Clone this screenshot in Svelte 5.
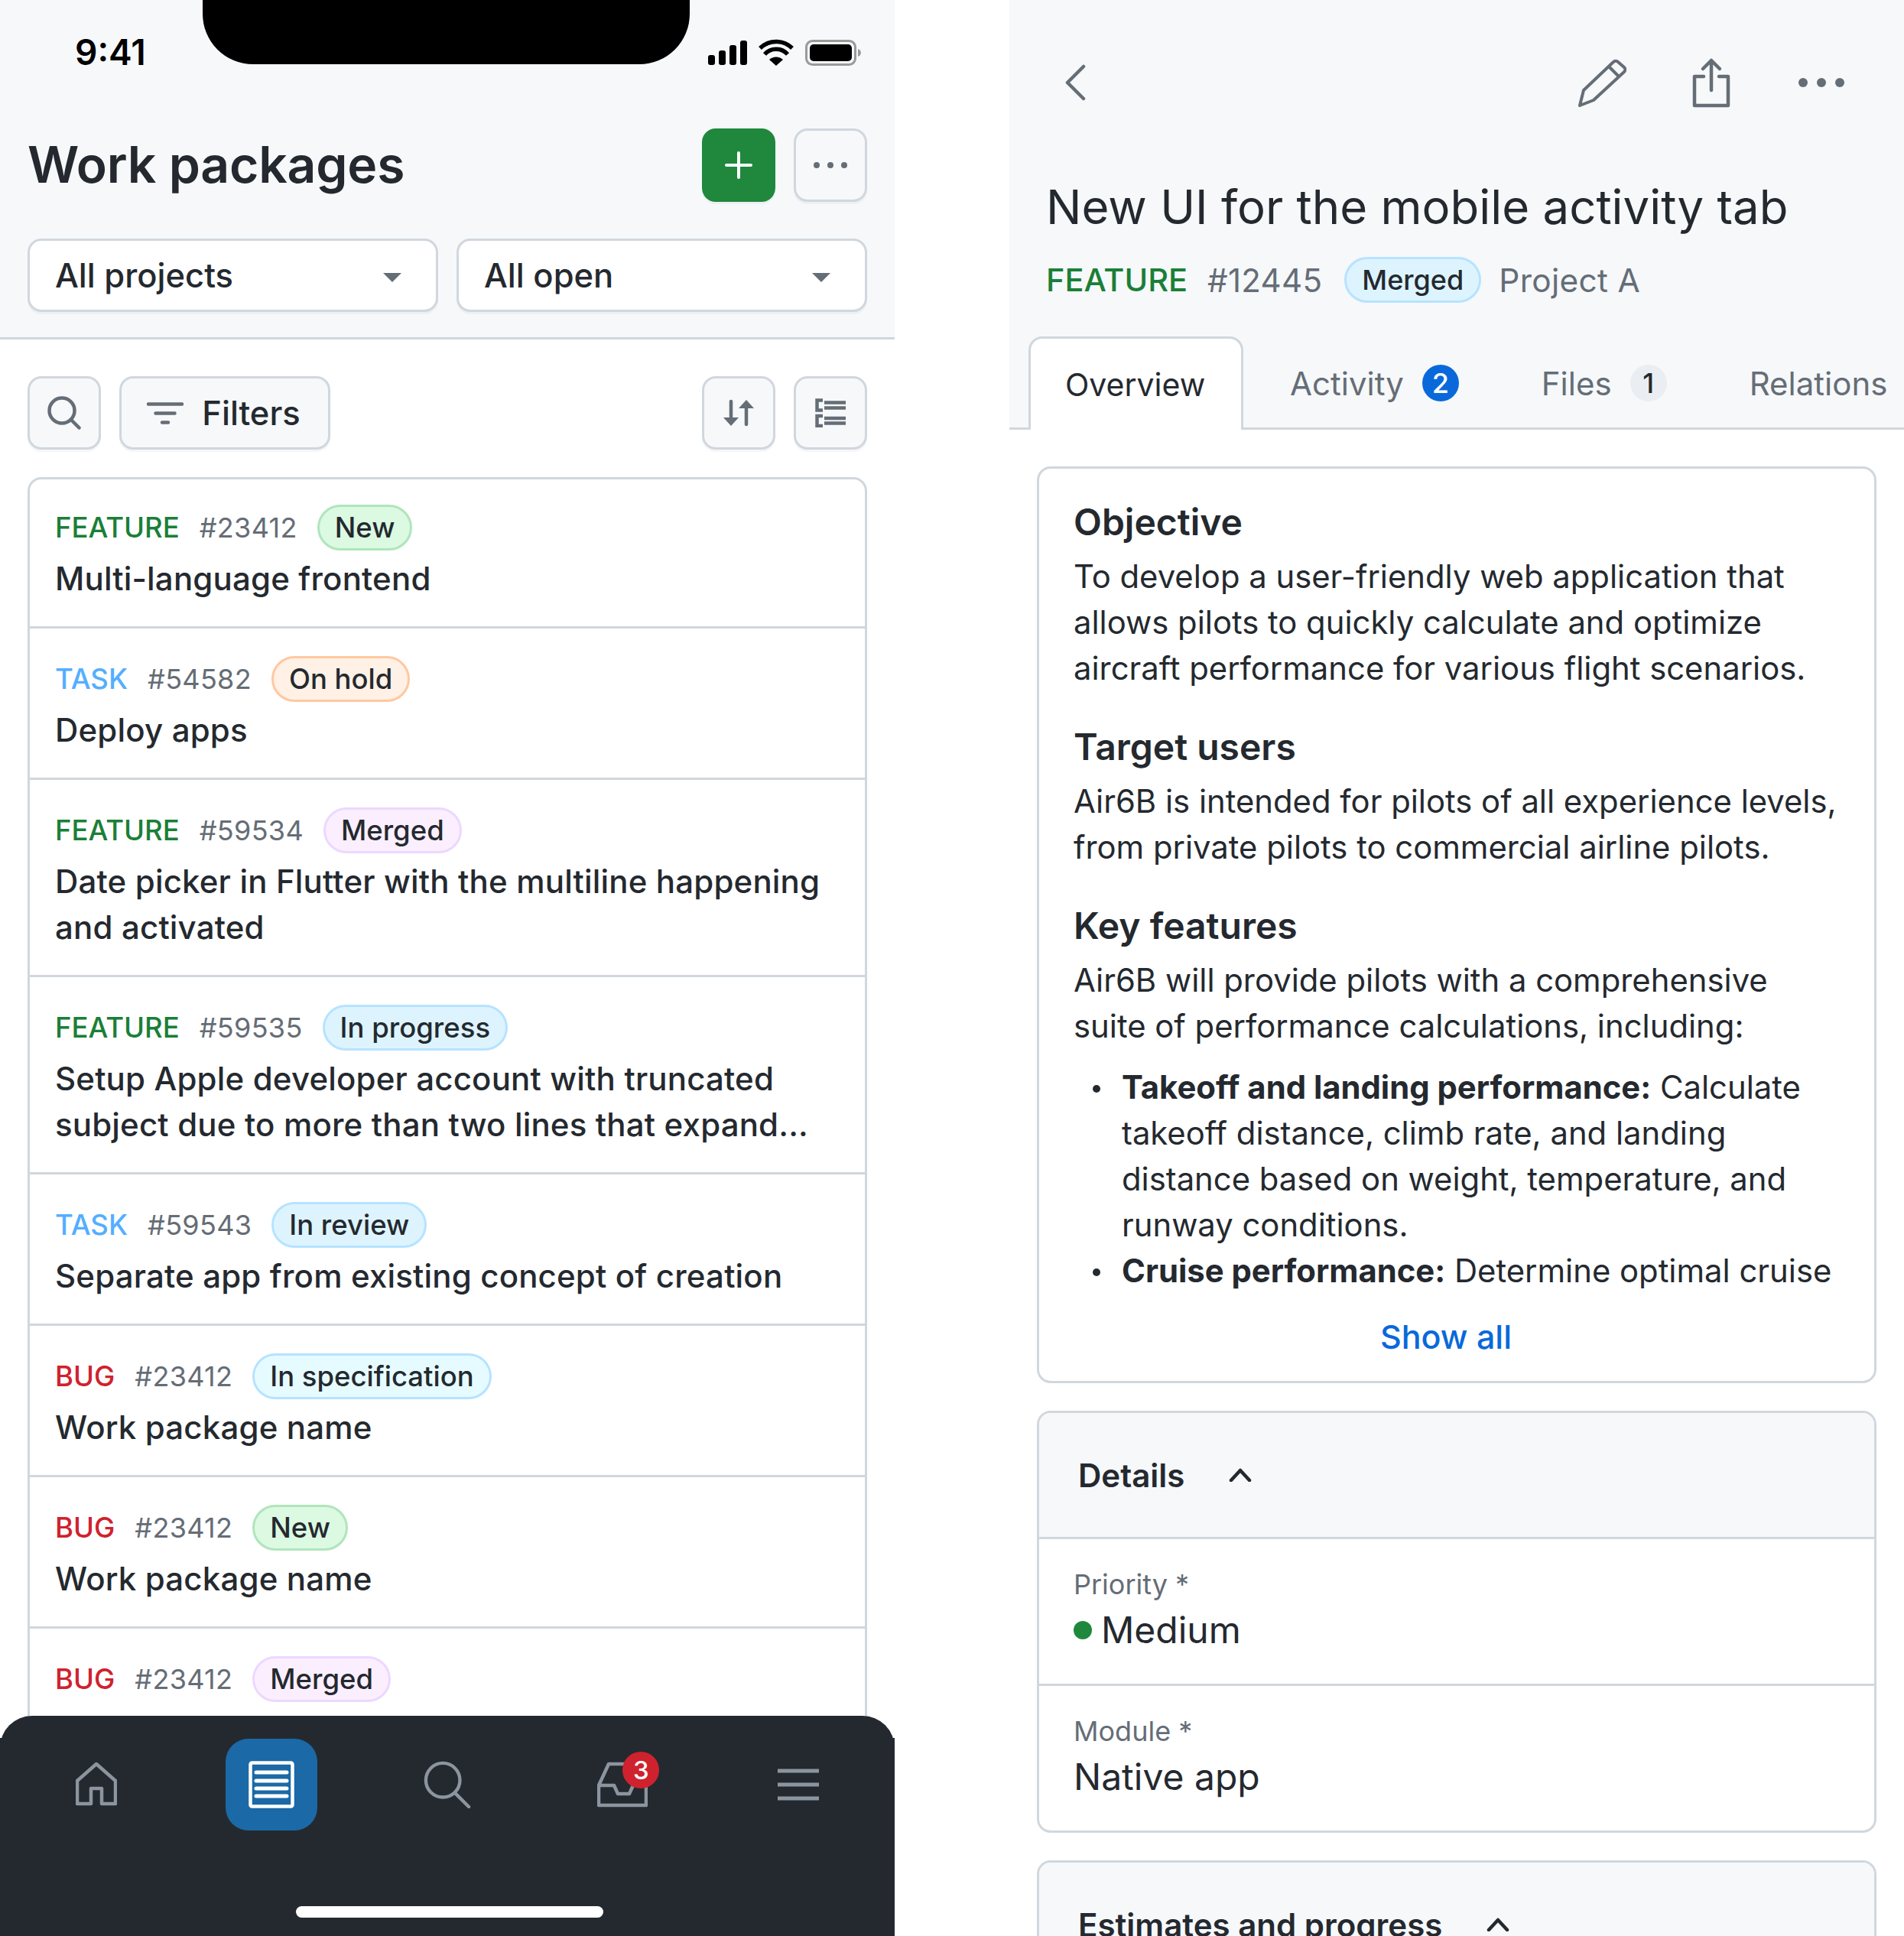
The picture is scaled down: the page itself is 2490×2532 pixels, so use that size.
<script>
  const rows = [
    { type: 'FEATURE', cls: 'feature', id: '#23412', pill: 'New', pc: 'green', title: ['Multi-language frontend'] },
    { type: 'TASK', cls: 'task', id: '#54582', pill: 'On hold', pc: 'orange', title: ['Deploy apps'] },
    { type: 'FEATURE', cls: 'feature', id: '#59534', pill: 'Merged', pc: 'purple', title: ['Date picker in Flutter with the multiline happening', 'and activated'] },
    { type: 'FEATURE', cls: 'feature', id: '#59535', pill: 'In progress', pc: 'blue', title: ['Setup Apple developer account with truncated', 'subject due to more than two lines that expand...'] },
    { type: 'TASK', cls: 'task', id: '#59543', pill: 'In review', pc: 'blue', title: ['Separate app from existing concept of creation'] },
    { type: 'BUG', cls: 'bug', id: '#23412', pill: 'In specification', pc: 'cyan', title: ['Work package name'] },
    { type: 'BUG', cls: 'bug', id: '#23412', pill: 'New', pc: 'green', title: ['Work package name'] },
    { type: 'BUG', cls: 'bug', id: '#23412', pill: 'Merged', pc: 'purple', title: ['Work package name'] }
  ];
</script>

<div class="page">
  <section class="phone">
    <header class="head">
      <div class="status">
        <span class="time">9:41</span>
        <div class="notch"></div>
        <svg class="sysicons" width="210" height="38" viewBox="0 0 210 38">
          <g fill="#000"><rect x="1" y="22" width="9" height="13" rx="3"/><rect x="15" y="16" width="9" height="19" rx="3"/><rect x="29" y="9" width="9" height="26" rx="3"/><rect x="43" y="3" width="9" height="32" rx="3"/></g>
          <path d="M69 13 a30 30 0 0 1 42 0 M75 21 a20 20 0 0 1 30 0" fill="none" stroke="#000" stroke-width="5.5"/>
          <path d="M81 28 a13 13 0 0 1 18 0 L90 36 Z" fill="#000"/>
          <rect x="129.5" y="3.5" width="64" height="31" rx="8" fill="none" stroke="#9a9a9a" stroke-width="3"/>
          <rect x="134" y="8" width="55" height="22" rx="5" fill="#000"/>
          <path d="M197 14 a6 6 0 0 1 4 5 a6 6 0 0 1 -4 5 Z" fill="#9a9a9a"/>
        </svg>
      </div>
      <div class="titlebar">
        <h1>Work packages</h1>
        <button class="btn add" aria-label="add"><svg width="36" height="36" viewBox="0 0 36 36"><path d="M18 2v32M2 18h32" stroke="#fff" stroke-width="4" stroke-linecap="round"/></svg></button>
        <button class="btn" aria-label="more"><svg width="48" height="12" viewBox="0 0 48 12" fill="#656d76"><circle cx="6" cy="6" r="4"/><circle cx="24" cy="6" r="4"/><circle cx="42" cy="6" r="4"/></svg></button>
      </div>
      <div class="selects">
        <div class="select"><span>All projects</span><i class="caret"></i></div>
        <div class="select"><span>All open</span><i class="caret"></i></div>
      </div>
    </header>

    <div class="toolbar">
      <button class="btn" aria-label="search"><svg width="44" height="44" viewBox="0 0 44 44" fill="none" stroke="#656d76" stroke-width="4.5" stroke-linecap="round"><circle cx="19" cy="19" r="16.5"/><path d="M31 31l10.5 10.5"/></svg></button>
      <button class="btn filters"><svg width="48" height="29" viewBox="0 0 48 29" stroke="#656d76" stroke-width="4.5" stroke-linecap="round"><path d="M2 2.5h44M11.5 14.5h25M20 26.5h8"/></svg><span>Filters</span></button>
      <span class="spacer"></span>
      <button class="btn" aria-label="sort"><svg width="40" height="36" viewBox="0 0 40 36" fill="#656d76" stroke-linecap="round"><path d="M10 3v22" stroke="#656d76" stroke-width="4.5"/><path d="M0 24h20L10 35z"/><path d="M30 33V11" stroke="#656d76" stroke-width="4.5"/><path d="M20 12h20L30 1z"/></svg></button>
      <button class="btn" aria-label="list"><svg width="40" height="38" viewBox="0 0 40 38" fill="none" stroke="#656d76" stroke-width="4.5"><path d="M10 2.5H2.5v13H10M10 23H2.5v13H10M12 5.5h28M12 12.5h28M12 26h28M12 32.5h28"/></svg></button>
    </div>

    <div class="list">
      {#each rows as r}
        <article class="row">
          <div class="meta">
            <span class="type {r.cls}">{r.type}</span>
            <span class="num">{r.id}</span>
            <span class="pill {r.pc}">{r.pill}</span>
          </div>
          {#each r.title as line}<div class="subject">{line}</div>{/each}
        </article>
      {/each}
    </div>

    <nav class="tabbar">
      <div class="navitems">
        <svg class="homeicon" width="54" height="58" viewBox="0 0 54 58" fill="none" stroke="#8c959f" stroke-width="4.5" stroke-linejoin="round"><path d="M27 3 52 25V55H34V35H20V55H2V25z"/></svg>
        <span class="active"><svg width="60" height="62" viewBox="0 0 60 62" fill="none" stroke="#fff" stroke-width="4.5"><rect x="2.5" y="2.5" width="55" height="57" rx="2"/><path d="M10 15h40M10 26h40M10 36h40M10 46h40" stroke-width="5" stroke-linecap="round"/></svg></span>
        <svg width="62" height="62" viewBox="0 0 64 64" fill="none" stroke="#8c959f" stroke-width="4.5" stroke-linecap="round"><circle cx="26" cy="26" r="23"/><path d="M43 44l18 18"/></svg>
        <span class="inbox">
          <svg width="66" height="60" viewBox="0 0 66 60" fill="none" stroke="#8c959f" stroke-width="4.5" stroke-linejoin="round"><path d="M2 31 15 3H52L64 31V57H2zM2 31H22L27 42H42L47 31H64"/></svg>
          <b>3</b>
        </span>
        <svg width="54" height="42" viewBox="0 0 54 42" stroke="#8c959f" stroke-width="5"><path d="M0 3h54M0 21h54M0 39h54"/></svg>
      </div>
      <div class="homebar"></div>
    </nav>
  </section>

  <section class="phone">
    <header class="head dhead">
      <div class="actions">
        <svg class="back" width="30" height="48" viewBox="0 0 30 48" fill="none" stroke="#656d76" stroke-width="4.5" stroke-linecap="round" stroke-linejoin="round"><path d="M25 3 4 24l21 21"/></svg>
        <span class="spacer"></span>
        <svg width="64" height="64" viewBox="0 0 64 64" fill="none" stroke="#656d76" stroke-width="4" stroke-linejoin="round"><path d="M3 62 8 42 47 5a4 4 0 0 1 6 0l8 7a4 4 0 0 1 0 6L21 55zM41 11l13 13"/></svg>
        <svg class="share" width="54" height="66" viewBox="0 0 54 66" fill="none" stroke="#656d76" stroke-width="4.5" stroke-linecap="round" stroke-linejoin="round"><path d="M27 4v39M16 15 27 4l11 11M17 25H5v38h44V25H37"/></svg>
        <svg class="dots" width="60" height="12" viewBox="0 0 60 12" fill="#656d76"><circle cx="6" cy="6" r="6"/><circle cx="30" cy="6" r="6"/><circle cx="54" cy="6" r="6"/></svg>
      </div>
      <h2 class="dtitle">New UI for the mobile activity tab</h2>
      <div class="dmeta">
        <span class="type feature">FEATURE</span>
        <span class="num">#12445</span>
        <span class="pill blue">Merged</span>
        <span class="num project">Project A</span>
      </div>
      <div class="tabs">
        <span class="tab on">Overview</span>
        <span class="tab">Activity <i class="count b">2</i></span>
        <span class="tab">Files <i class="count g">1</i></span>
        <span class="tab">Relations</span>
      </div>
    </header>

    <div class="content">
      <div class="card desc">
        <h3>Objective</h3>
        <p>To develop a user-friendly web application that<br>allows pilots to quickly calculate and optimize<br>aircraft performance for various flight scenarios.</p>
        <h3>Target users</h3>
        <p>Air6B is intended for pilots of all experience levels,<br>from private pilots to commercial airline pilots.</p>
        <h3>Key features</h3>
        <p>Air6B will provide pilots with a comprehensive<br>suite of performance calculations, including:</p>
        <ul>
          <li><strong>Takeoff and landing performance:</strong> Calculate<br>takeoff distance, climb rate, and landing<br>distance based on weight, temperature, and<br>runway conditions.</li>
          <li><strong>Cruise performance:</strong> Determine optimal cruise</li>
        </ul>
        <div class="showall">Show all</div>
      </div>

      <div class="card">
        <div class="sechead">Details <svg width="30" height="18" viewBox="0 0 30 18" fill="none" stroke="#24292f" stroke-width="4.5" stroke-linecap="round" stroke-linejoin="round"><path d="M3 16 15 3l12 13"/></svg></div>
        <div class="field"><label>Priority *</label><div class="val"><i class="dot"></i>Medium</div></div>
        <div class="field"><label>Module *</label><div class="val">Native app</div></div>
      </div>

      <div class="card">
        <div class="sechead">Estimates and progress <svg width="30" height="18" viewBox="0 0 30 18" fill="none" stroke="#24292f" stroke-width="4.5" stroke-linecap="round" stroke-linejoin="round"><path d="M3 16 15 3l12 13"/></svg></div>
      </div>
    </div>
  </section>
</div>

<style>
  :global(body) { margin: 0; background: #fff; }
  .page { display: flex; gap: 150px; width: 2490px; height: 2532px; overflow: hidden; font-family: Inter, "Noto Sans", sans-serif; color: #24292f; }
  .phone { position: relative; width: 1170px; height: 2532px; overflow: hidden; flex: none; background: #fff; }
  .spacer { flex: 1; }

  .head { background: #f6f8fa; border-bottom: 3px solid #d0d7de; height: 444px; box-sizing: border-box; }
  .status { position: relative; height: 168px; }
  .time { position: absolute; left: 98px; top: 40px; font-size: 46px; font-weight: 600; line-height: 56px; color: #000; }
  .notch { position: absolute; left: 265px; top: 0; width: 637px; height: 84px; background: #000; border-radius: 0 0 66px 66px; }
  .sysicons { position: absolute; left: 925px; top: 50px; }
  .titlebar { display: flex; align-items: center; gap: 24px; padding: 0 36px; height: 96px; }
  h1 { flex: 1; margin: -3px 0 0; font-size: 66px; font-weight: 600; line-height: 96px; letter-spacing: -0.2px; }
  .btn { box-sizing: border-box; width: 96px; height: 96px; flex: none; padding: 0; display: flex; align-items: center; justify-content: center; background: #f6f8fa; border: 3px solid #d0d7de; border-radius: 18px; box-shadow: 0 3px 0 rgba(31,35,40,.04); font: inherit; color: inherit; }
  .add { background: #1f883d; border-color: #1f883d; }
  .selects { display: flex; gap: 24px; padding: 0 36px; margin-top: 48px; }
  .select { flex: 1; box-sizing: border-box; height: 96px; display: flex; align-items: center; justify-content: space-between; padding: 0 45px 0 33px; background: #fff; border: 3px solid #d0d7de; border-radius: 18px; box-shadow: 0 3px 0 rgba(31,35,40,.04); font-size: 43.5px; font-weight: 500; }
  .caret { width: 0; height: 0; margin-top: 5px; border: 12px solid transparent; border-top: 12px solid #656d76; border-bottom: 0; }

  .toolbar { display: flex; gap: 24px; padding: 0 36px; margin-top: 48px; }
  .filters { width: 276px; gap: 24px; padding-right: 3px; font-size: 43.5px; font-weight: 500; }

  .list { margin: 36px 36px 0; border: 3px solid #d0d7de; border-radius: 18px 18px 0 0; }
  .row { padding: 36px 33px 32px; border-bottom: 3px solid #d0d7de; }
  .row:first-child { padding-top: 33px; }
  .meta { display: flex; align-items: center; gap: 26px; height: 60px; margin-bottom: 7px; }
  .type { font-size: 36.5px; font-weight: 500; }
  .feature { color: #1a7f37; }
  .task { color: #54aeff; }
  .bug { color: #cf222e; }
  .num { font-size: 36px; letter-spacing: 0.3px; color: #656d76; }
  .pill { box-sizing: border-box; height: 60px; display: inline-flex; align-items: center; padding: 0 20px; border: 3px solid; border-radius: 30px; font-size: 36.5px; font-weight: 500; color: #24292f; }
  .green { background: #dcf9e2; border-color: #b0e5bc; }
  .orange { background: #fff1e5; border-color: #ffc8a0; }
  .purple { background: #fbefff; border-color: #ecd8ff; }
  .blue { background: #ddf4ff; border-color: #b6e3ff; }
  .cyan { background: #e6fbff; border-color: #b6e3ff; }
  .subject { font-size: 42px; font-weight: 500; line-height: 60px; letter-spacing: 0.17px; white-space: nowrap; }

  .tabbar { position: absolute; left: 0; right: 0; top: 2244px; bottom: 0; display: flow-root; background: linear-gradient(#24292f, #24292f) 0 29px / 100% 100% no-repeat; }
  .tabbar::before { content: ""; position: absolute; left: 0; right: 0; top: 0; height: 60px; background: #24292f; border-radius: 42px 42px 0 0; }
  .navitems { position: relative; display: grid; grid-template-columns: repeat(5, 229.5px); justify-items: center; align-items: center; height: 120px; margin-top: 30px; padding-left: 11px; }
  .homeicon { margin-bottom: 3px; }
  .active { width: 120px; height: 120px; display: flex; align-items: center; justify-content: center; background: #1b69a7; border-radius: 30px; }
  .inbox { position: relative; display: flex; }
  .inbox b { position: absolute; left: 33px; top: -13px; width: 48px; height: 48px; border-radius: 50%; background: #cf222e; color: #fff; font-size: 33px; font-weight: 500; text-align: center; line-height: 48px; }
  .homebar { position: absolute; left: 387px; top: 249px; width: 402px; height: 15px; border-radius: 8px; background: #fff; }

  .dhead { height: 562px; display: flex; flex-direction: column; }
  .actions { display: flex; align-items: center; padding: 75px 78px 0 72px; height: 66px; gap: 84px; }
  .back { margin-right: -84px; }
  .share { margin-right: 3px; }
  .dtitle { margin: 0; padding: 0 48px; margin-top: 90px; font-size: 61.7px; font-weight: 400; line-height: 80px; white-space: nowrap; }
  .dmeta { display: flex; align-items: center; gap: 26px; padding: 0 48px; margin-top: 25px; }
  .dmeta .type { font-size: 41.5px; }
  .dmeta .num { font-size: 42px; }
  .dmeta .pill { margin-left: 3px; font-size: 36px; }
  .dmeta .project { margin-left: -3px; font-size: 42.4px; }
  .tabs { display: flex; align-items: stretch; height: 122px; margin: auto 0 -3px 25px; font-size: 42px; color: #656d76; }
  .tab { display: flex; align-items: center; gap: 24px; padding: 0 54px; box-sizing: border-box; white-space: nowrap; }
  .tab.on { background: #fff; color: #24292f; font-size: 41px; border: 3px solid #d0d7de; border-bottom: 0; border-radius: 18px 18px 0 0; padding: 0 45px; width: 281px; margin-right: 7px; flex: none; }
  .count { width: 48px; height: 48px; border-radius: 50%; display: flex; align-items: center; justify-content: center; font-style: normal; font-size: 36px; font-weight: 500; }
  .b { background: #0969da; color: #fff; }
  .g { background: #eaeef2; color: #24292f; }

  .content { padding: 48px 36px 0; display: flex; flex-direction: column; gap: 36px; }
  .card { border: 3px solid #d0d7de; border-radius: 18px; }
  .desc { padding: 40px 45px 0; height: 1199px; box-sizing: border-box; }
  h3 { margin: 0 0 11px; font-size: 48px; font-weight: 600; line-height: 60px; }
  p { margin: 0 0 43px; font-size: 41.8px; line-height: 60px; white-space: nowrap; }
  ul { margin: -23px 0 0; padding: 0 0 0 63px; list-style: none; font-size: 41.8px; line-height: 60px; white-space: nowrap; }
  li { position: relative; }
  li::before { content: ""; position: absolute; left: -38px; top: 27px; width: 10px; height: 10px; border-radius: 50%; background: #24292f; }
  strong { font-weight: 700; }
  .showall { color: #0969da; font-size: 43px; font-weight: 500; line-height: 60px; text-align: center; margin-top: 26px; margin-left: -28px; }
  .sechead { background: #f6f8fa; height: 162px; box-sizing: border-box; display: flex; align-items: center; gap: 58px; padding: 0 51px; font-size: 42px; font-weight: 600; border-radius: 15px 15px 0 0; }
  .field { border-top: 3px solid #d0d7de; height: 192px; box-sizing: border-box; padding: 38px 45px 0; }
  label { display: block; font-size: 36px; line-height: 42px; color: #656d76; }
  .val { display: flex; align-items: center; gap: 12px; font-size: 48px; line-height: 60px; margin-top: 9px; }
  .dot { width: 24px; height: 24px; border-radius: 50%; background: #1f883d; }
</style>
